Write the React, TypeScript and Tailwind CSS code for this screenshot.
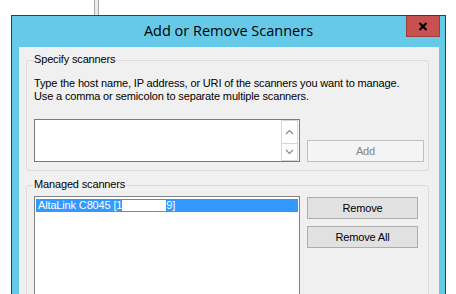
import React from "react";

const ui = { fontFamily: '"Liberation Sans", Arial, sans-serif' };
const title = { fontFamily: '"Open Sans", "Noto Sans", sans-serif' };

function Chevron({ up }: { up?: boolean }) {
  return (
    <svg width="9" height="6" viewBox="0 0 9 6">
      <path
        d={up ? "M1 5 L4.5 1.5 L8 5" : "M1 1 L4.5 4.5 L8 1"}
        fill="none"
        stroke="#868686"
        strokeWidth="1.2"
      />
    </svg>
  );
}

export default function App() {
  return (
    <div
      className="w-[456px] h-[294px] bg-white overflow-hidden text-[11px] leading-[13px] tracking-[-0.15px] text-black"
      style={ui}
    >
      {/* window edge behind */}
      <div className="ml-[94px] w-[5px] h-[15px] border-x border-[#a7a7a7] bg-[#ececec]" />

      {/* dialog window */}
      <div className="ml-[11px] w-[435px] h-[279px] border border-b-0 border-[#3d3d3d] bg-[#66c9e8] flex flex-col">
        {/* title bar */}
        <div className="h-[31px] flex items-start shrink-0">
          <div className="w-[39px] shrink-0" />
          <div
            className="flex-1 text-center text-[14.5px] leading-[20px] pt-[5px] tracking-normal text-black"
            style={title}
          >
            Add or Remove Scanners
          </div>
          <div className="w-[34px] h-[21px] mr-[5px] bg-[#c75050] border border-[#a03c3c] border-t-0 flex items-center justify-center shrink-0">
            <svg width="10" height="9" viewBox="0 0 10 9">
              <path d="M1.5 1 L8.5 8 M8.5 1 L1.5 8" stroke="#000" strokeWidth="2.2" />
            </svg>
          </div>
        </div>

        {/* client */}
        <div className="flex-1 ml-[7px] mr-[6px] bg-[#f0f0f0] pt-[13px]">
          {/* Specify scanners */}
          <div className="relative ml-[7px] w-[403px] h-[111px] border border-[#dcdcdc] rounded-[3px] pl-[7px] pt-[16px]">
            <div className="absolute left-[6px] top-[-8px] px-[1px] bg-[#f0f0f0]">
              Specify scanners
            </div>
            <div>
              Type the host name, IP address, or URI of the scanners you want to manage.
              <br />
              Use a comma or semicolon to separate multiple scanners.
            </div>
            <div className="mt-[16px] flex items-end">
              <div className="w-[266px] h-[43px] border border-[#7a7a7a] bg-white flex justify-end pr-[1px]">
                <div className="w-[17px] flex flex-col">
                  <div className="h-[24px] border border-[#d6d6d6] flex items-center justify-center">
                    <Chevron up />
                  </div>
                  <div className="h-[17px] border border-[#d6d6d6] border-t-0 flex items-center justify-center">
                    <Chevron />
                  </div>
                </div>
              </div>
              <div className="ml-[7px] w-[117px] h-[22px] border border-[#bfbfbf] bg-[#f4f4f4] text-[#838383] flex items-center justify-center">
                Add
              </div>
            </div>
          </div>

          {/* Managed scanners */}
          <div className="relative mt-[14px] ml-[7px] w-[403px] h-[120px] border border-[#dcdcdc] rounded-[3px] pl-[7px] pt-[10px] flex items-start">
            <div className="absolute left-[6px] top-[-8px] px-[1px] bg-[#f0f0f0]">
              Managed scanners
            </div>
            <div className="w-[266px] h-[110px] border border-[#828282] bg-white pt-[2px] px-[1px]">
              <div className="h-[13px] bg-[#3399ff] text-white pl-[2px] whitespace-nowrap flex items-center">
                <span>AltaLink C8045 [1</span>
                <span className="inline-block w-[44px] h-[11px] bg-white" />
                <span>9]</span>
              </div>
            </div>
            <div className="ml-[7px] flex flex-col gap-[7px] pt-[1px]">
              <div className="w-[111px] h-[22px] border border-[#adadad] bg-[#e1e1e1] flex items-center justify-center">
                Remove
              </div>
              <div className="w-[111px] h-[22px] border border-[#adadad] bg-[#e1e1e1] flex items-center justify-center">
                Remove All
              </div>
            </div>
          </div>
        </div>
      </div>
    </div>
  );
}
